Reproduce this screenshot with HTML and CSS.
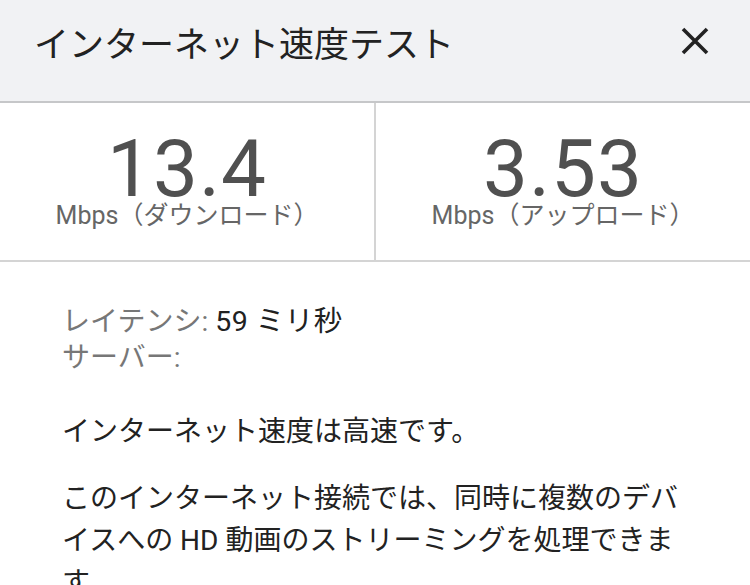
FILE: index.html
```html
<!DOCTYPE html>
<html lang="ja">
<head>
<meta charset="utf-8">
<link rel="stylesheet" href="styles.css">
</head>
<body>
<div class="header">
  <div class="title">インターネット速度テスト</div>
  <svg class="close" width="30" height="30" viewBox="0 0 30 30"><path d="M3 3 L27 27 M27 3 L3 27" stroke="#222" stroke-width="3.6" stroke-linecap="butt" fill="none"/></svg>
</div>
<div class="stats">
  <div class="cell">
    <div class="num">13.4</div>
    <div class="unit">Mbps（ダウンロード）</div>
  </div>
  <div class="cell right">
    <div class="num">3.53</div>
    <div class="unit">Mbps（アップロード）</div>
  </div>
</div>
<div class="body">
  <div class="info"><span class="lbl">レイテンシ:</span> <span class="val">59 ミリ秒</span></div>
  <div class="info"><span class="lbl">サーバー:</span></div>
  <p class="summary">インターネット速度は高速です。</p>
  <p class="desc">このインターネット接続では、同時に複数のデバイスへの HD 動画のストリーミングを処理できます。</p>
</div>
</body>
</html>
```
FILE: styles.css
```css
html, body {
  margin: 0;
  padding: 0;
  background: #fff;
  width: 750px;
  height: 585px;
  overflow: hidden;
  font-family: Roboto, "Noto Sans CJK JP", sans-serif;
}
.header {
  height: 101px;
  background: #f1f2f4;
  border-bottom: 2px solid #c6c7c9;
  display: flex;
  align-items: flex-start;
  justify-content: space-between;
}
.title {
  font-family: "Noto Sans CJK JP", sans-serif;
  font-size: 35px;
  line-height: 40px;
  color: #222;
  margin: 22px 0 0 34px;
}
.close {
  margin: 26px 40px 0 0;
}
.stats {
  display: flex;
  height: 157px;
  border-bottom: 2px solid #d4d4d4;
}
.cell {
  flex: 1;
  display: flex;
  flex-direction: column;
  align-items: center;
  padding-top: 32px;
}
.cell.right {
  border-left: 2px solid #d4d4d4;
}
.num {
  font-size: 80px;
  line-height: 68px;
  letter-spacing: 1px;
  color: #505050;
  font-weight: 400;
}
.unit {
  font-size: 25px;
  line-height: 26px;
  color: #666;
}
.body {
  padding: 42px 63px 0 62px;
}
.info {
  font-size: 28px;
  line-height: 36px;
}
.lbl { color: #777; }
.val { color: #212121; font-size: 28.5px; letter-spacing: 0.5px; }
.summary {
  margin: 35px 0 0;
  font-size: 28px;
  line-height: 42px;
  color: #222;
}
.desc {
  margin: 25px 0 0;
  font-size: 28px;
  line-height: 42px;
  color: #222;
}
```
